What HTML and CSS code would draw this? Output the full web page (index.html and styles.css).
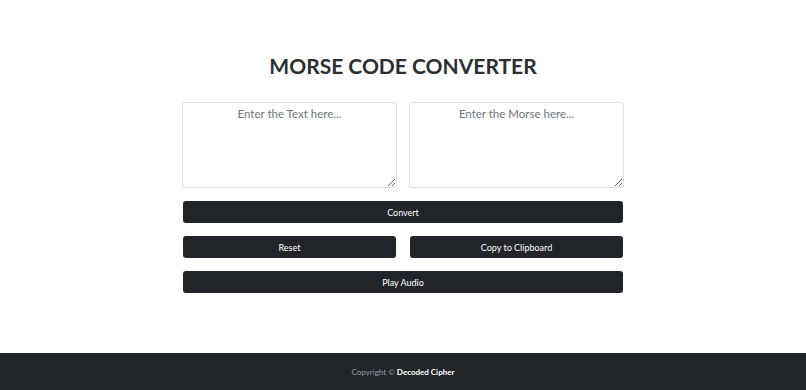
FILE: index.html
```html
<!DOCTYPE html>
<html lang="en">
<head>
    <meta charset="UTF-8">
    <meta name="viewport" content="width=device-width, initial-scale=1.0">
    <title>Morse Code Converter</title>
    <link rel="stylesheet" href="styles.css">
</head>
<body>

    <div class="main">
        <h1 class="title">MORSE CODE CONVERTER</h1>

        <div class="converter">
            <div class="row">
                <textarea id="text-input" class="input-box" placeholder="Enter the Text here..."></textarea>
                <textarea id="morse-input" class="input-box" placeholder="Enter the Morse here..."></textarea>
            </div>
            <button class="btn">Convert</button>
            <div class="row">
                <button class="btn">Reset</button>
                <button class="btn">Copy to Clipboard</button>
            </div>
            <button class="btn">Play Audio</button>
        </div>
    </div>

    <footer class="footer">
        <p>Copyright &copy; <strong>Decoded Cipher</strong></p>
    </footer>

</body>
</html>
```

FILE: styles.css
```css
* {
    box-sizing: border-box;
}

body {
    font-family: Lato, "Noto Sans", sans-serif;
    background-color: #ffffff;
    color: #212529;
    margin: 0;
    padding: 0;
    height: 390px;
    display: flex;
    flex-direction: column;
}

.main {
    flex: 1;
    padding-top: 50px;
}

.title {
    text-align: center;
    font-size: 21px;
    font-weight: 700;
    margin: 0 0 20px 0;
    line-height: 32px;
    color: #2b2e32;
}

.converter {
    width: 442px;
    margin: 0 auto;
    display: flex;
    flex-direction: column;
    gap: 13px;
}

.row {
    display: flex;
    gap: 12px;
}

.input-box {
    flex: 1;
    height: 86px;
    border: 1px solid #dee2e6;
    border-radius: 3px;
    padding: 4px 8px;
    text-align: center;
    font-family: inherit;
    font-size: 11.5px;
    resize: vertical;
}

.input-box::placeholder {
    color: #6c757d;
}

.btn {
    flex: none;
    height: 22px;
    margin: 0 1px;
    background-color: #212529;
    color: #ffffff;
    border: none;
    border-radius: 3px;
    font-family: inherit;
    font-size: 9px;
    cursor: pointer;
}

.row .btn {
    flex: 1;
}

.btn:hover {
    background-color: #424649;
}

.footer {
    height: 37px;
    background-color: #212529;
    color: #9a9ea3;
    display: flex;
    align-items: center;
    justify-content: center;
    font-size: 8px;
}

.footer p {
    margin: 0;
}

.footer strong {
    color: #ffffff;
}
```
